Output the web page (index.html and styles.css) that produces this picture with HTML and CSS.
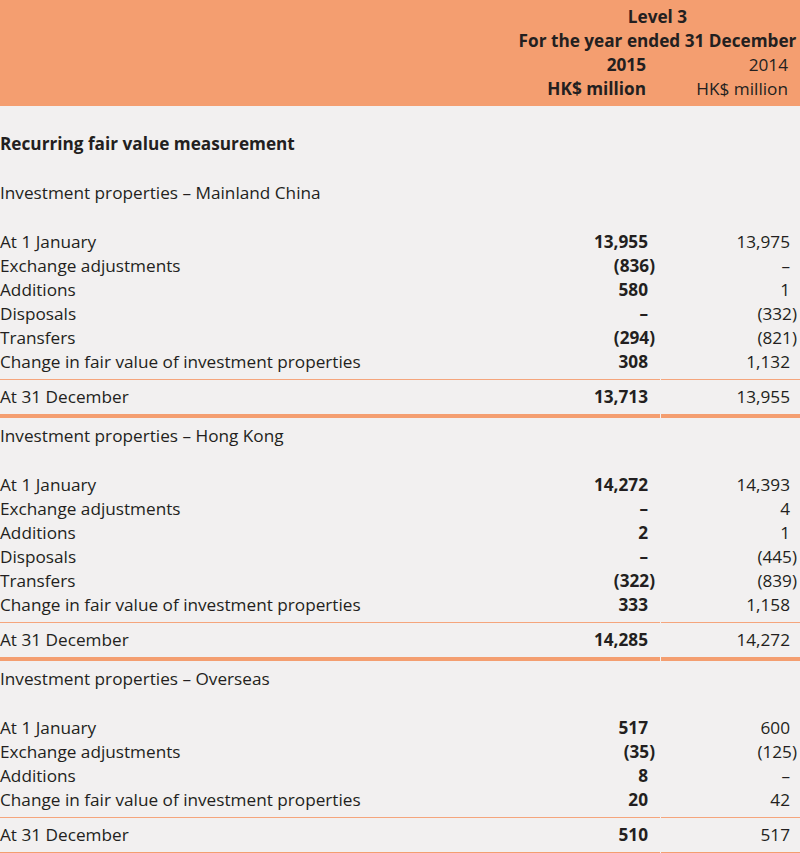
FILE: index.html
```html
<!DOCTYPE html>
<html>
<head>
<meta charset="utf-8">
<link rel="stylesheet" href="styles.css">
</head>
<body>
<div class="page">
  <div class="head">
    <div class="head-title">
      <div>Level 3</div>
      <div>For the year ended 31 December</div>
    </div>
    <div class="row hrow">
      <div></div>
      <div class="c1 b">2015</div>
      <div class="c2">2014</div>
    </div>
    <div class="row hrow">
      <div></div>
      <div class="c1 b">HK$ million</div>
      <div class="c2">HK$ million</div>
    </div>
  </div>

  <div class="intro b">Recurring fair value measurement</div>

  <div class="section">
    <div class="stitle">Investment properties – Mainland China</div>
    <div class="row"><div>At 1 January</div><div class="c1 b">13,955</div><div class="c2">13,975</div></div>
    <div class="row"><div>Exchange adjustments</div><div class="c1 b"><span class="neg">(836)</span></div><div class="c2">–</div></div>
    <div class="row"><div>Additions</div><div class="c1 b">580</div><div class="c2">1</div></div>
    <div class="row"><div>Disposals</div><div class="c1 b">–</div><div class="c2"><span class="neg">(332)</span></div></div>
    <div class="row"><div>Transfers</div><div class="c1 b"><span class="neg">(294)</span></div><div class="c2"><span class="neg">(821)</span></div></div>
    <div class="row last"><div>Change in fair value of investment properties</div><div class="c1 b">308</div><div class="c2">1,132</div></div>
    <div class="row total"><div>At 31 December</div><div class="c1 b">13,713</div><div class="c2">13,955</div></div>
  </div>

  <div class="section">
    <div class="stitle">Investment properties – Hong Kong</div>
    <div class="row"><div>At 1 January</div><div class="c1 b">14,272</div><div class="c2">14,393</div></div>
    <div class="row"><div>Exchange adjustments</div><div class="c1 b">–</div><div class="c2">4</div></div>
    <div class="row"><div>Additions</div><div class="c1 b">2</div><div class="c2">1</div></div>
    <div class="row"><div>Disposals</div><div class="c1 b">–</div><div class="c2"><span class="neg">(445)</span></div></div>
    <div class="row"><div>Transfers</div><div class="c1 b"><span class="neg">(322)</span></div><div class="c2"><span class="neg">(839)</span></div></div>
    <div class="row last"><div>Change in fair value of investment properties</div><div class="c1 b">333</div><div class="c2">1,158</div></div>
    <div class="row total"><div>At 31 December</div><div class="c1 b">14,285</div><div class="c2">14,272</div></div>
  </div>

  <div class="section">
    <div class="stitle">Investment properties – Overseas</div>
    <div class="row"><div>At 1 January</div><div class="c1 b">517</div><div class="c2">600</div></div>
    <div class="row"><div>Exchange adjustments</div><div class="c1 b"><span class="neg">(35)</span></div><div class="c2"><span class="neg">(125)</span></div></div>
    <div class="row"><div>Additions</div><div class="c1 b">8</div><div class="c2">–</div></div>
    <div class="row last"><div>Change in fair value of investment properties</div><div class="c1 b">20</div><div class="c2">42</div></div>
    <div class="row total"><div>At 31 December</div><div class="c1 b">510</div><div class="c2">517</div></div>
  </div>
</div>
</body>
</html>
```

FILE: styles.css
```css
html, body {
  margin: 0;
  padding: 0;
  background: #f2f0f0;
}
body {
  font-family: "Open Sans", "Liberation Sans", sans-serif;
  font-size: 17.2px;
  color: #231f20;
  line-height: 24px;
}
.page {
  width: 800px;
  overflow: hidden;
}
.b { font-weight: 700; }

.head {
  background: #f49e70;
  padding: 5px 0 5px;
}
.head-title {
  width: 285px;
  margin-left: auto;
  text-align: center;
  font-weight: 700;
}
.row {
  display: grid;
  grid-template-columns: 1fr 179px 140px;
}
.row > div {
  white-space: nowrap;
}
.c1, .c2 {
  text-align: right;
}
.c1 { padding-right: 12px; }
.c2 { padding-right: 10px; margin-left: 1px; }
.hrow .c1 { padding-right: 14px; }
.hrow .c2 { padding-right: 12px; }

.neg { margin-right: -7px; }

.intro {
  padding-top: 26px;
  margin-bottom: 25px;
}
.section .stitle {
  margin-bottom: 25px;
}
.section + .section .stitle {
  padding-top: 6px;
}
.row.last > div {
  padding-bottom: 5px;
  border-bottom: 1px solid #f5a57c;
}
.row.total > div {
  padding-top: 5px;
  padding-bottom: 5px;
  border-bottom: 4px solid #f49e70;
}
```
